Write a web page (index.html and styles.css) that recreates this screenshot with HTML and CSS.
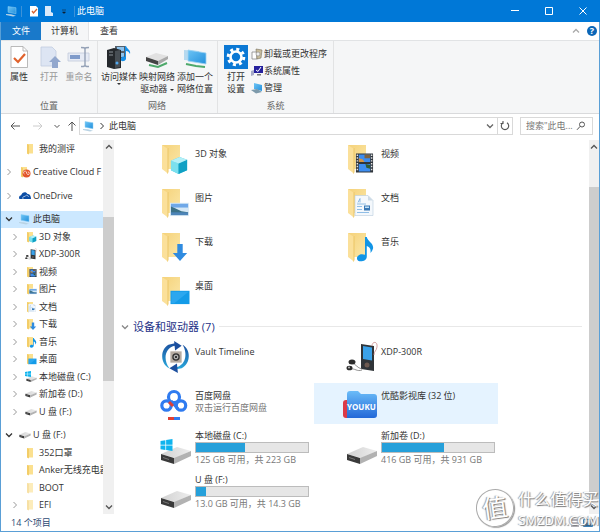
FILE: index.html
```html
<!DOCTYPE html>
<html lang="zh-CN">
<head>
    <meta charset="UTF-8">
    <meta name="viewport" content="width=device-width, initial-scale=1.0">
    <title>此电脑</title>
    <link rel="stylesheet" href="styles.css">
</head>
<body>
    <svg class="sprite" aria-hidden="true">
        <defs>
            <linearGradient id="g-folder" x1="0" y1="0" x2="1" y2="1">
                <stop offset="0" stop-color="#f5d27a"/>
                <stop offset="1" stop-color="#fbe7a8"/>
            </linearGradient>
            <linearGradient id="g-screen" x1="0" y1="0" x2="1" y2="1">
                <stop offset="0" stop-color="#6cc4f5"/>
                <stop offset="1" stop-color="#2490dc"/>
            </linearGradient>
            <linearGradient id="g-disk" x1="0" y1="0" x2="1" y2="0">
                <stop offset="0" stop-color="#d2d2d2"/>
                <stop offset="1" stop-color="#ededed"/>
            </linearGradient>
            <linearGradient id="g-youku" x1="0" y1="0" x2="0" y2="1">
                <stop offset="0" stop-color="#6bbcf8"/>
                <stop offset="1" stop-color="#2268d8"/>
            </linearGradient>
            <linearGradient id="g-ring" x1="0" y1="0" x2="0" y2="1">
                <stop offset="0" stop-color="#1c4f9e"/>
                <stop offset="1" stop-color="#29a9dd"/>
            </linearGradient>
        </defs>
        <symbol id="right" viewBox="0 0 8 8"><path d="M2.5 1l3 3-3 3" fill="none" stroke="currentColor"/></symbol>
        <symbol id="down" viewBox="0 0 8 8"><path d="M1 2.5l3 3 3-3" fill="none" stroke="currentColor" stroke-width="1.3"/></symbol>
        <symbol id="up" viewBox="0 0 8 8"><path d="M1 5.500l3-3 3 3" fill="none" stroke="currentColor" stroke-width="1.3"/></symbol>
        <symbol id="pc" viewBox="0 0 12 12">
            <path d="M2 1.500l8 1.200v6L2 7.200z" fill="url(#g-screen)" stroke="#8fd0f5" stroke-width=".5"/>
            <path d="M0 9l5 .3 5 1.400-3 .8-7-1.500z" fill="#b9d3e4"/>
        </symbol>
        <symbol id="f-small" viewBox="0 0 12 12">
            <path d="M2 1h6v9.500H2z" fill="#fbe08f"/><path d="M2 1l2 1v9.500l-2-1z" fill="#f3cd68"/>
        </symbol>
        <symbol id="f-big" viewBox="0 0 32 32">
            <path d="M2 2h18v24H7z" fill="url(#g-folder)"/>
            <path d="M2 2l6 4v25l-2-2-4-3z" fill="#fbe09a"/>
            <path d="M7.500 5.500l1-.5v24l-1 2z" fill="#ecc566"/>
        </symbol>
        <symbol id="o-3d" viewBox="0 0 20 20">
            <path d="M1 5l9-4 8 3v11l-9 4-8-4z" fill="#4fc7e0"/><path d="M1 5l8 3v11l-8-4z" fill="#7be0ee"/>
            <path d="M9 8l9-4v11l-9 4z" fill="#0fa0c4"/><path d="M1 5l9-4 8 3-9 4z" fill="#b4f0f7"/>
        </symbol>
        <symbol id="o-video" viewBox="0 0 20 20">
            <path d="M1 0h18v20H1z" fill="#30363c"/><path d="M4 1h12v8H4zM4 11h12v8H4z" fill="#3d8df0"/>
            <path d="M10 1h6v4h-6z" fill="#7d6240"/><path d="M4 5l4 1 2 3H4z" fill="#d59442"/><path d="M11 11l5 1v4l-4-1z" fill="#315c35"/>
            <path d="M2.500 1v18M17.500 1v18" stroke="#e6e6e6" stroke-width="1.500" stroke-dasharray="1.500 1.500"/>
        </symbol>
        <symbol id="o-pic" viewBox="0 0 20 20">
            <path d="M0 4h20v14H0z" fill="#dcebf5"/><path d="M1 5h18v5H1z" fill="#6fa8e8"/><path d="M1 9h18v4H1z" fill="#d5e8f6"/>
            <path d="M1 8l5 2 6 3 7 1v1H1z" fill="#3b7187"/><path d="M1 14h18v3H1z" fill="#4d84b8"/>
        </symbol>
        <symbol id="o-doc" viewBox="0 0 20 20">
            <path d="M1 0h13l5 5v15H1z" fill="#f4f8fc" stroke="#b9cddd" stroke-width=".6"/><path d="M14 0v5h5z" fill="#cddbe6"/>
            <path d="M4 7l2-4v4M3 8.500h9M3 11h5M3 14h5M3 17h12" fill="none" stroke="#76afe0" stroke-width=".8"/>
            <path d="M10 10h6v5h-6z" fill="#3a78b5"/><path d="M11 11h4v1.500h-4z" fill="#bfe0f5"/>
        </symbol>
        <symbol id="o-down" viewBox="0 0 20 20"><path d="M7 1h6v10h5l-8 9-8-9h5z" fill="#2f8be0"/></symbol>
        <symbol id="o-music" viewBox="0 0 20 28"><path d="M10 0h2c1 5 8 7 7 13-1 3-2 4-3 5 1-5-1-7-4-8v12c0 6-11 7-11 2 0-4 5-6 9-4z" fill="#1295e6"/></symbol>
        <symbol id="o-desk" viewBox="0 0 20 20"><path d="M0 4h20v14H0z" fill="#139be8"/><path d="M1 5h18L4 17H1z" fill="#2ba7ef"/></symbol>
        <symbol id="disk" viewBox="0 0 32 20">
            <path d="M1 9L17 2l14 4-16 7z" fill="url(#g-disk)"/><path d="M1 9l13 4v6L1 15z" fill="#3a3a3a"/>
            <path d="M14 13L31 6v5l-17 8z" fill="#b2b2b2"/><path d="M3 12l6 2v1l-6-2z" fill="#777"/>
        </symbol>
        <symbol id="win" viewBox="0 0 16 16"><path d="M0 2.500L6.500 1.500v6H0zM7.500 1.300L16 0v7.500H7.500zM0 8.500h6.500v6L0 13.500zM7.500 8.500H16V16l-8.500-1.300z" fill="#0fb4ee"/></symbol>
        <symbol id="player" viewBox="0 0 32 32">
            <path d="M15 3l13 2v25l-13-2z" fill="#303438"/><path d="M17 5l9 1.500v13L17 18z" fill="#3aa2ea"/>
            <circle cx="21" cy="24" r="2.500" fill="#6d5950"/><path d="M26 5c0-5 6-5 5 1-.5 4-3 4-3 8" fill="none" stroke="#c98d8d" stroke-width=".8"/>
            <path d="M6 22c4 1 5 5 10 6M4 28c5-1 7 3 12 1" fill="none" stroke="#777" stroke-width=".8"/>
            <ellipse cx="6" cy="21" rx="3.500" ry="2.500" fill="#2c2c2c"/><ellipse cx="3.500" cy="27" rx="3" ry="2.300" fill="#2c2c2c"/><circle cx="3" cy="26.500" r="1" fill="#bbb"/>
        </symbol>
    </svg>

    <div class="window">
        <header class="titlebar">
            <svg class="i12"><use href="#pc"/></svg>
            <span class="bar"></span>
            <button class="quick" aria-label="属性"><svg viewBox="0 0 10 12"><path d="M1 1h6l2 2v8.500H1z" fill="#fff"/><path d="M3 6l1.500 2L8 4" fill="none" stroke="#d9622f" stroke-width="1.300"/></svg></button>
            <button class="quick" aria-label="新建文件夹"><svg viewBox="0 0 10 12"><path d="M1 1h6v6l2 1v3H1z" fill="#dbeafa"/></svg></button>
            <button class="quick" aria-label="自定义"><svg viewBox="0 0 10 12"><path d="M3 5h4M3.500 7h3L5 8.500z" stroke="#12314f" stroke-width=".7"/></svg></button>
            <span class="bar"></span>
            <h1>此电脑</h1>
            <div class="controls">
                <button aria-label="最小化"><svg viewBox="0 0 8 8"><path d="M0 3.500h8"/></svg></button>
                <button aria-label="最大化"><svg viewBox="0 0 8 8"><path d="M.5.5h7v7h-7z"/></svg></button>
                <button aria-label="关闭"><svg viewBox="0 0 8 8"><path d="M.5.5l7 7M7.500.5l-7 7"/></svg></button>
            </div>
        </header>

        <nav class="tabs">
            <button class="tab file">文件</button>
            <button class="tab active">计算机</button>
            <button class="tab">查看</button>
            <button class="fold" aria-label="折叠功能区"><svg class="i8"><use href="#up"/></svg></button>
            <button class="help" aria-label="帮助">?</button>
        </nav>

        <section class="ribbon">
            <div class="group">
                <div class="tools">
                    <button class="tool narrow">
                        <svg viewBox="0 0 24 24"><path d="M4 1.500h12l4.500 4.500v16.500H4z" fill="#fff" stroke="#aaa" stroke-width=".8"/><path d="M16 1.500V6h4.500" fill="none" stroke="#aaa" stroke-width=".8"/><path d="M7 13l4 4 7-8" fill="none" stroke="#e0622c" stroke-width="2.200"/></svg>
                        属性
                    </button>
                    <button class="tool narrow" disabled>
                        <svg viewBox="0 0 24 24"><path d="M4 2h11l4 4v15H4z" fill="#dde5f3" stroke="#c1cde0" stroke-width=".8"/><path d="M15 23v-6h-3l6-6 6 6h-3v6z" fill="#92a7cd"/></svg>
                        打开
                    </button>
                    <button class="tool narrow" disabled>
                        <svg viewBox="0 0 24 24"><path d="M1 8h21v8H1z" fill="#e6ebf5" stroke="#c1cadb" stroke-width=".8"/><path d="M3 10h10v4H3z" fill="#7f9bca"/><path d="M14 2.500c3 0 4 0 4 2v15c0 2-1 2-4 2M22 2.500c-3 0-4 0-4 2v15c0 2 1 2 4 2" fill="none" stroke="#94a1b6" stroke-width="1.400"/></svg>
                        重命名
                    </button>
                </div>
                <h2>位置</h2>
            </div>
            <div class="group">
                <div class="tools">
                    <button class="tool">
                        <svg viewBox="0 0 24 24"><path d="M8 1h11v12H8z" fill="#54606c"/><path d="M10 2h7v4h-7zM10 8h7v4h-7z" fill="#8cc3ee"/><path d="M0 5l7-2 7 2v18l-7 1-7-2z" fill="#25292d"/><path d="M8 6l5-1v17l-5 1z" fill="#474e54"/><path d="M2 7h4M2 10h4" stroke="#8b9298"/><path d="M19 1c1 3 5 4 4 8-1-2-2-3-4-3v8c-1 3-6 3-5 0 0-2 2-3 4-2V1z" fill="#1690e8"/><circle cx="10" cy="18" r="1.500" fill="#50a8ef"/></svg>
                        <span>访问媒体</span>
                        <i class="caret"></i>
                    </button>
                    <button class="tool">
                        <svg viewBox="0 0 24 24"><path d="M1 12l10-4 12 3-9 5z" fill="#e1e1e1"/><path d="M1 12l12 4v4L1 16z" fill="#444"/><path d="M13 16l10-5v3l-10 6z" fill="#a9a9a9"/><path d="M4 20l9 2 9-4" fill="none" stroke="#4ea96b" stroke-width="2"/></svg>
                        <span>映射网络<br>驱动器 <i class="caret"></i></span>
                    </button>
                    <button class="tool">
                        <svg viewBox="0 0 24 24"><path d="M1 5l15 1v10L1 15z" fill="#b6d9ef"/><path d="M5 5l18 3v11L5 16z" fill="url(#g-screen)" stroke="#9dd2f1" stroke-width=".8"/><path d="M3 19l10 2 9 1" stroke="#4ea96b" stroke-width="2" fill="none"/></svg>
                        <span>添加一个<br>网络位置</span>
                    </button>
                </div>
                <h2>网络</h2>
            </div>
            <div class="group">
                <div class="tools">
                    <button class="tool narrow">
                        <svg viewBox="0 0 24 24"><path d="M0 0h24v24H0z" fill="#0b78d4"/><circle cx="12" cy="12" r="5.500" fill="none" stroke="#fff" stroke-width="2.600"/><circle cx="12" cy="12" r="7.800" fill="none" stroke="#fff" stroke-width="3" stroke-dasharray="3 3.126"/></svg>
                        <span>打开<br>设置</span>
                    </button>
                    <ul class="links">
                        <li><button><svg viewBox="0 0 12 12"><path d="M1 4h5v7H1z" fill="#fff" stroke="#888" stroke-width=".8"/><path d="M5 1l6 1-1 8-4 1z" fill="#c9bd9b" stroke="#77705e" stroke-width=".6"/><circle cx="7" cy="6" r="2" fill="#eee" stroke="#888" stroke-width=".6"/></svg>卸载或更改程序</button></li>
                        <li><button><svg viewBox="0 0 12 12"><path d="M3 1h9v7H3z" fill="#26219d"/><path d="M5 5l2 1.500L10 2" fill="none" stroke="#fff"/><path d="M6 9h4v1.500H6z" fill="#777"/><path d="M0 6l3-1v5l-3 1z" fill="#a5a9c8"/></svg>系统属性</button></li>
                        <li><button><svg viewBox="0 0 12 12"><path d="M3 1l8 2v6L3 7z" fill="url(#g-screen)"/><path d="M0 8l6-1 5 3-6 1.500z" fill="#7d9aab"/></svg>管理</button></li>
                    </ul>
                </div>
                <h2>系统</h2>
            </div>
        </section>

        <div class="navbar">
            <button class="nav" aria-label="后退"><svg viewBox="0 0 10 10"><path d="M10 5H1M4.500 1.500L1 5l3.500 3.500"/></svg></button>
            <button class="nav" aria-label="前进" disabled><svg viewBox="0 0 10 10"><path d="M0 5h9M5.500 1.500L9 5 5.500 8.500"/></svg></button>
            <button class="nav slim" aria-label="最近位置"><svg viewBox="0 0 10 10"><path d="M2.500 4L5 6.500 7.500 4"/></svg></button>
            <button class="nav slim" aria-label="向上"><svg viewBox="0 0 10 10"><path d="M5 10V1M1.500 4.500L5 1l3.500 3.500"/></svg></button>
            <div class="address">
                <svg class="i12"><use href="#pc"/></svg>
                <svg class="i8"><use href="#right"/></svg>
                <a href="#">此电脑</a>
                <button class="drop" aria-label="历史"><svg class="i8"><use href="#down"/></svg></button>
                <button class="refresh" aria-label="刷新"><svg viewBox="0 0 10 10"><path d="M7 1.800A3.700 3.700 0 1 1 3 1.800M3 0v2.500H.5" fill="none" stroke="#555" stroke-width="1.100"/></svg></button>
            </div>
            <label class="search">
                <input type="text" aria-label="搜索" placeholder="搜索&quot;此电...">
                <svg viewBox="0 0 10 10"><circle cx="6" cy="3.500" r="2.500"/><path d="M4.200 5.300L1 8.800"/></svg>
            </label>
        </div>

        <div class="body">
            <nav class="tree">
                <a href="#" class="node sub"><span class="i8"></span><svg class="i12"><use href="#f-small"/></svg>我的测评</a>
                <a href="#" class="node top"><svg class="i8"><use href="#right"/></svg><svg class="i12" viewBox="0 0 12 12"><use href="#f-small"/><circle cx="7.500" cy="7.500" r="4" fill="#e2552b"/><path d="M5.500 8a1.500 1.500 0 1 1 2-1l1 1.500a1.300 1.300 0 1 0 .3-2.500" fill="none" stroke="#fff" stroke-width=".7"/></svg>Creative Cloud F</a>
                <a href="#" class="node top"><svg class="i8"><use href="#right"/></svg><svg class="i12" viewBox="0 0 12 12"><path d="M0 8c0-2 1-2.500 2-2.500C3 2 7 1 8.500 4 11 4 12 6 12 9H2C1 9 0 9 0 8z" fill="#0b4da5"/><path d="M4 9c-1-2 1-3 2-2.500C7 4.500 9 5 9.500 7" fill="none" stroke="#fff" stroke-width=".6"/></svg>OneDrive</a>
                <a href="#" class="node top open selected"><svg class="i8"><use href="#down"/></svg><svg class="i12"><use href="#pc"/></svg>此电脑</a>
                <a href="#" class="node sub"><svg class="i8"><use href="#right"/></svg><svg class="i12" viewBox="0 0 12 12"><use href="#f-small"/><use href="#o-3d" x="4" y="4" width="8" height="8"/></svg>3D 对象</a>
                <a href="#" class="node sub"><svg class="i8"><use href="#right"/></svg><svg class="i12"><use href="#player"/></svg>XDP-300R</a>
                <a href="#" class="node sub"><svg class="i8"><use href="#right"/></svg><svg class="i12" viewBox="0 0 12 12"><use href="#f-small"/><use href="#o-video" x="4" y="3" width="8" height="8"/></svg>视频</a>
                <a href="#" class="node sub"><svg class="i8"><use href="#right"/></svg><svg class="i12" viewBox="0 0 12 12"><use href="#f-small"/><use href="#o-pic" x="4" y="4" width="8" height="8"/></svg>图片</a>
                <a href="#" class="node sub"><svg class="i8"><use href="#right"/></svg><svg class="i12" viewBox="0 0 12 12"><use href="#f-small"/><use href="#o-doc" x="3" y="3" width="8" height="8"/></svg>文档</a>
                <a href="#" class="node sub"><svg class="i8"><use href="#right"/></svg><svg class="i12" viewBox="0 0 12 12"><use href="#f-small"/><use href="#o-down" x="4" y="4" width="8" height="8"/></svg>下载</a>
                <a href="#" class="node sub"><svg class="i8"><use href="#right"/></svg><svg class="i12" viewBox="0 0 12 12"><use href="#f-small"/><use href="#o-music" x="4" y="2" width="8" height="10"/></svg>音乐</a>
                <a href="#" class="node sub"><svg class="i8"><use href="#right"/></svg><svg class="i12" viewBox="0 0 12 12"><use href="#f-small"/><use href="#o-desk" x="3" y="4" width="9" height="8"/></svg>桌面</a>
                <a href="#" class="node sub"><svg class="i8"><use href="#right"/></svg><svg class="i12" viewBox="0 0 12 12"><use href="#disk" x="1" y="4" width="11" height="8"/><use href="#win" x="0" y="0" width="6" height="6"/></svg>本地磁盘 (C:)</a>
                <a href="#" class="node sub"><svg class="i8"><use href="#right"/></svg><svg class="i12"><use href="#disk"/></svg>新加卷 (D:)</a>
                <a href="#" class="node sub"><svg class="i8"><use href="#right"/></svg><svg class="i12"><use href="#disk"/></svg>U 盘 (F:)</a>
                <a href="#" class="node top open"><svg class="i8"><use href="#down"/></svg><svg class="i12"><use href="#disk"/></svg>U 盘 (F:)</a>
                <a href="#" class="node sub"><span class="i8"></span><svg class="i12"><use href="#f-small"/></svg>352口罩</a>
                <a href="#" class="node sub"><span class="i8"></span><svg class="i12"><use href="#f-small"/></svg>Anker无线充电器</a>
                <a href="#" class="node sub faded"><span class="i8"></span><svg class="i12"><use href="#f-small"/></svg>BOOT</a>
                <a href="#" class="node sub faded"><svg class="i8"><use href="#right"/></svg><svg class="i12"><use href="#f-small"/></svg>EFI</a>
            </nav>
            <div class="scroll side">
                <svg class="i8"><use href="#up"/></svg>
                <span class="before"></span><span class="thumb"></span><span class="after"></span>
                <svg class="i8"><use href="#down"/></svg>
            </div>

            <main>
                <div class="grid">
                    <a href="#" class="item raised"><svg class="i32" viewBox="0 0 32 32"><use href="#f-big"/><use href="#o-3d" x="10" y="13" width="19" height="19"/></svg><span>3D 对象</span></a>
                    <a href="#" class="item raised"><svg class="i32" viewBox="0 0 32 32"><use href="#f-big"/><use href="#o-video" x="9" y="10" width="19" height="20"/></svg><span>视频</span></a>
                    <a href="#" class="item raised"><svg class="i32" viewBox="0 0 32 32"><use href="#f-big"/><use href="#o-pic" x="10" y="12" width="19" height="19"/></svg><span>图片</span></a>
                    <a href="#" class="item raised"><svg class="i32" viewBox="0 0 32 32"><use href="#f-big"/><use href="#o-doc" x="8" y="8" width="20" height="21"/></svg><span>文档</span></a>
                    <a href="#" class="item raised"><svg class="i32" viewBox="0 0 32 32"><use href="#f-big"/><use href="#o-down" x="11" y="12" width="18" height="18"/></svg><span>下载</span></a>
                    <a href="#" class="item raised"><svg class="i32" viewBox="0 0 32 32"><use href="#f-big"/><use href="#o-music" x="10" y="6" width="18" height="25"/></svg><span>音乐</span></a>
                    <a href="#" class="item raised"><svg class="i32" viewBox="0 0 32 32"><use href="#f-big"/><use href="#o-desk" x="10" y="12" width="20" height="19"/></svg><span>桌面</span></a>
                </div>

                <h2 class="section"><svg class="i8"><use href="#down"/></svg>设备和驱动器 (7)</h2>

                <div class="grid">
                    <a href="#" class="item raised">
                        <svg class="i32" viewBox="0 0 32 34"><path d="M9 29C0 25-2 10 8 4l8-2-1 3C4 7 2 20 9 29z" fill="url(#g-ring)"/><path d="M14 0l8 5-7 5z" fill="#1c4f9e"/><path d="M23 4c9 5 9 20-1 25l-6 1v-2c10-2 13-14 7-24z" fill="url(#g-ring)"/><path d="M17 24l-8 5 9 5z" fill="#1c4f9e"/><path d="M10 11h12v12H10z" fill="#b6aca2"/><circle cx="16" cy="17" r="4" fill="#333"/><circle cx="16" cy="17" r="2" fill="none" stroke="#ddd"/></svg>
                        <span>Vault Timeline</span>
                    </a>
                    <a href="#" class="item raised">
                        <svg class="i32"><use href="#player"/></svg>
                        <span>XDP-300R</span>
                    </a>
                    <a href="#" class="item">
                        <svg class="i32" viewBox="0 0 32 32"><g fill="none" stroke="#2f7bf0" stroke-width="3.200"><circle cx="14" cy="9" r="5.500"/><circle cx="6.500" cy="17.500" r="4.700"/><circle cx="21" cy="17.500" r="4.700"/></g><path d="M11 13l7 8" stroke="#2f7bf0" stroke-width="3"/><path d="M9 14l4 4" stroke="#e04034" stroke-width="3"/><path d="M8 29h6v3H8z" fill="#e04034"/><path d="M14 29h6v3h-6z" fill="#2f7bf0"/></svg>
                        <span>百度网盘<small>双击运行百度网盘</small></span>
                    </a>
                    <a href="#" class="item hover">
                        <svg class="i36" viewBox="0 0 36 32"><rect x="1" y="12" width="12" height="18" rx="3" fill="#dc3a48"/><path d="M5 6c0-2 1-3 3-3h8l3 3h13c2 0 3 1 3 3v18c0 2-1 3-3 3H5z" fill="url(#g-youku)"/><text x="5" y="22" class="youku">YOUKU</text></svg>
                        <span>优酷影视库 (32 位)</span>
                    </a>
                    <a href="#" class="item drive">
                        <svg class="i32" viewBox="0 0 32 32"><use href="#disk" x="0" y="9" width="32" height="20"/><use href="#win" x="0" y="3" width="13" height="12"/></svg>
                        <span>本地磁盘 (C:)<b class="usage"><i style="width: 44%"></i></b><small>125 GB 可用，共 223 GB</small></span>
                    </a>
                    <a href="#" class="item drive">
                        <svg class="i32" viewBox="0 0 32 32"><use href="#disk" x="0" y="9" width="32" height="20"/></svg>
                        <span>新加卷 (D:)<b class="usage"><i style="width: 55%"></i></b><small>416 GB 可用，共 931 GB</small></span>
                    </a>
                    <a href="#" class="item drive">
                        <svg class="i32" viewBox="0 0 32 32"><use href="#disk" x="0" y="9" width="32" height="20"/></svg>
                        <span>U 盘 (F:)<b class="usage"><i style="width: 9%"></i></b><small>13.0 GB 可用，共 14.3 GB</small></span>
                    </a>
                </div>
            </main>
            <div class="scroll content">
                <svg class="i8"><use href="#up"/></svg>
                <span class="before"></span><span class="thumb"></span><span class="after"></span>
                <svg class="i8"><use href="#down"/></svg>
            </div>
        </div>

        <footer class="status">
            <span>14 个项目</span>
            <svg viewBox="0 0 24 10"><path d="M1 2h8M1 5h8M1 8h8" stroke="#667"/><path d="M13.500 1.500h9v7h-9z" fill="#cfe6f8" stroke="#3b7fb5"/><path d="M14 8l3-4 2 2 1-1 2 3z" fill="#28608f"/></svg>
        </footer>

        <div class="watermark">
            <span class="seal">值</span>
            <p>什么值得买<small>SMZDM.COM</small></p>
        </div>
    </div>
</body>
</html>
```
FILE: styles.css
```css
* {
    box-sizing: border-box;
}

body {
    margin: 0;
    font-family: "Open Sans", "Noto Sans CJK SC", sans-serif;
    font-size: 9px;
    line-height: 12px;
    color: #333;
    background-color: #fff;
}

button {
    border: none;
    padding: 0;
    background: none;
    font: inherit;
    color: inherit;
}

a {
    color: inherit;
    text-decoration: none;
}

h1, h2, ul, p {
    margin: 0;
    padding: 0;
    font-size: 9px;
    font-weight: normal;
    list-style: none;
}

svg {
    display: block;
    flex: none;
}

.sprite {
    position: absolute;
    width: 0;
    height: 0;
}

.i8 {
    width: 8px;
    height: 8px;
    flex: none;
}

.i12 {
    width: 12px;
    height: 12px;
}

.i32 {
    width: 32px;
    height: 32px;
}

.i36 {
    width: 36px;
    height: 32px;
}

.window {
    position: relative;
    display: flex;
    flex-direction: column;
    min-height: 100vh;
    border: 1px solid #5a9fd6;
    border-top: none;
}

/* Barra de título */
.titlebar {
    display: flex;
    align-items: center;
    height: 22px;
    margin: 0 -1px;
    padding-left: 6px;
    background-color: #0078d7;
    color: #fff;
}

.titlebar .bar {
    width: 1px;
    height: 11px;
    margin: 0 4px 0 3px;
    background-color: #3d92d8;
}

.titlebar h1 {
    margin-left: -2px;
}

.quick {
    width: 15px;
}

.quick svg {
    width: 10px;
    height: 12px;
    margin: 0 auto;
}

.controls {
    display: flex;
    margin-left: auto;
}

.controls button {
    width: 34px;
    height: 22px;
}

.controls svg {
    width: 8px;
    height: 8px;
    margin: 0 auto;
    fill: none;
    stroke: #fff;
}

.tabs {
    display: flex;
    height: 18px;
}

.tab {
    padding: 0 11px;
}

.tab.file {
    background-color: #1979ca;
    color: #fff;
}

.tab.active {
    padding: 0 10px;
    border-right: 1px solid #e3e4e6;
    background-color: #f5f6f7;
}

.fold {
    margin-left: auto;
    color: #aaa;
}

.help {
    width: 10px;
    height: 10px;
    margin: 4px 2px 0 7px;
    border-radius: 50%;
    background-color: #0a66b7;
    color: #fff;
    font-weight: bold;
    line-height: 10px;
}

.ribbon {
    display: flex;
    height: 74px;
    border-top: 1px solid #e1e3e5;
    border-bottom: 1px solid #d9dadc;
    background-color: #f5f6f7;
}

.group {
    display: flex;
    flex-direction: column;
    justify-content: space-between;
    border-right: 1px solid #e2e3e4;
    padding: 4px 3px 1px;
}

.group:nth-child(2) {
    padding-left: 2px;
}

.group h2 {
    text-align: center;
    color: #666;
}

.tools {
    display: flex;
}

.tool {
    display: flex;
    flex-direction: column;
    align-items: center;
    width: 38px;
    white-space: nowrap;
}

.tool.narrow {
    width: 30px;
}

.tool svg {
    width: 24px;
    height: 24px;
    margin-bottom: 2px;
}

.tool:disabled {
    color: #999;
}

.caret {
    display: inline-block;
    border: 2px solid transparent;
    border-top-color: #333;
    border-bottom: none;
    vertical-align: middle;
}

.links button {
    display: flex;
    align-items: center;
    gap: 1px;
    height: 17px;
    padding-right: 3px;
    white-space: nowrap;
}

.links svg {
    width: 12px;
    height: 12px;
}

/* Barra de dirección */
.navbar {
    display: flex;
    align-items: center;
    padding: 3px 6px 3px 2px;
}

.nav {
    width: 23px;
}

.nav.slim {
    width: 15px;
}

.nav svg {
    width: 10px;
    height: 10px;
    margin: 0 auto;
    fill: none;
    stroke: #555;
}

.nav:disabled svg {
    stroke: #ccc;
}

.address, .search {
    display: flex;
    align-items: center;
    height: 18px;
    border: 1px solid #d9d9d9;
}

.address {
    flex: 1;
    gap: 3px;
    padding-left: 3px;
}

.drop {
    margin-left: auto;
    color: #666;
}

.refresh {
    height: 16px;
    padding: 0 2px;
    border-left: 1px solid #d9d9d9;
}

.refresh svg {
    width: 10px;
    height: 10px;
}

.search {
    width: 73px;
    margin-left: 7px;
    padding: 0 6px 0 5px;
}

.search input {
    width: 100%;
    min-width: 0;
    padding: 0;
    border: none;
    outline: none;
    font: inherit;
}

.search input::placeholder {
    color: #777;
}

.search svg {
    width: 10px;
    height: 10px;
    fill: none;
    stroke: #555;
}

.body {
    display: flex;
    flex: 1;
    padding-top: 2px;
}

/* Árbol de carpetas */
.tree {
    display: flex;
    flex-direction: column;
    width: 102px;
    overflow: hidden;
}

.node {
    display: flex;
    flex: 1;
    align-items: center;
    min-height: 17px;
    white-space: nowrap;
}

.node .i8 {
    margin-right: 6px;
    color: #999;
}

.node .i12 {
    margin-right: 2px;
}

.node.top {
    margin-top: 6px;
    padding-left: 4px;
}

.node.sub {
    padding-left: 10px;
}

.node.open .i8 {
    color: #333;
}

.node.selected {
    background-color: #cce8ff;
}

.node.faded .i12 {
    opacity: 0.6;
}

.scroll {
    display: flex;
    flex-direction: column;
    align-items: center;
    padding: 3px 0;
    background-color: #f0f0f0;
    color: #555;
}

.scroll.side {
    width: 11px;
}

.scroll.content {
    width: 10px;
}

.thumb {
    width: 100%;
    background-color: #cdcdcd;
}

.side .before {
    flex: 66;
}

.side .thumb {
    flex: 164;
}

.side .after {
    flex: 122;
}

.content .before {
    flex: 36;
}

.content .thumb {
    flex: 312;
}

.content .after {
    flex: 4;
}

main {
    flex: 1;
    padding: 1px 7px 2px 14px;
}

.grid {
    display: grid;
    grid-template-columns: repeat(auto-fill, 184px);
    grid-auto-rows: 41px;
    gap: 3px 2px;
}

.item {
    display: flex;
    align-items: center;
    gap: 3px;
    padding-left: 32px;
}

.item > span {
    align-self: flex-start;
    padding-top: 7px;
    white-space: nowrap;
}

.item.raised > svg {
    align-self: flex-start;
    margin-top: 2px;
}

.item.drive > svg {
    align-self: flex-end;
}

.item .i36 {
    margin: 0 -4px 0 -4px;
}

.item .i36 + span {
    padding-left: 4px;
}

.item small {
    display: block;
    font-size: 9px;
    color: #777;
}

.item.drive > span {
    padding-top: 3px;
}

.item.hover {
    background-color: #e5f3ff;
}

.usage {
    display: block;
    width: 114px;
    height: 11px;
    margin-bottom: 1px;
    border: 1px solid #bcbcbc;
    background-color: #e6e6e6;
}

.usage i {
    display: block;
    height: 100%;
    background-color: #26a0da;
}

.youku {
    font: bold 8px "Open Sans", sans-serif;
    fill: #fff;
}

.section {
    display: flex;
    align-items: center;
    gap: 4px;
    height: 25px;
    margin-left: -7px;
    font-size: 11px;
    color: #1e3287;
}

.section .i8 {
    color: #888;
}

.section::after {
    content: "";
    flex: 1;
    height: 1px;
    background-color: #e8e8e8;
}

.status {
    display: flex;
    align-items: center;
    justify-content: space-between;
    height: 17px;
    padding: 0 5px 0 10px;
    color: #2d4a73;
}

.status svg {
    width: 24px;
    height: 10px;
}

/* Marca de agua */
.watermark {
    position: absolute;
    right: 0;
    bottom: 2px;
    display: flex;
    align-items: center;
    gap: 4px;
    color: #fff;
    text-shadow: 1px 1px 1px #777, -1px 0 1px #999;
}

.watermark p {
    font-size: 16px;
    line-height: 24px;
}

.watermark small {
    display: block;
    font-size: 13px;
    line-height: 18px;
}

.seal {
    width: 38px;
    height: 38px;
    border: 1px solid #aaa;
    border-radius: 50%;
    box-shadow: 1px 1px 1px #999;
    font-size: 25px;
    line-height: 34px;
    text-align: center;
    transform: rotate(-8deg);
}
```
